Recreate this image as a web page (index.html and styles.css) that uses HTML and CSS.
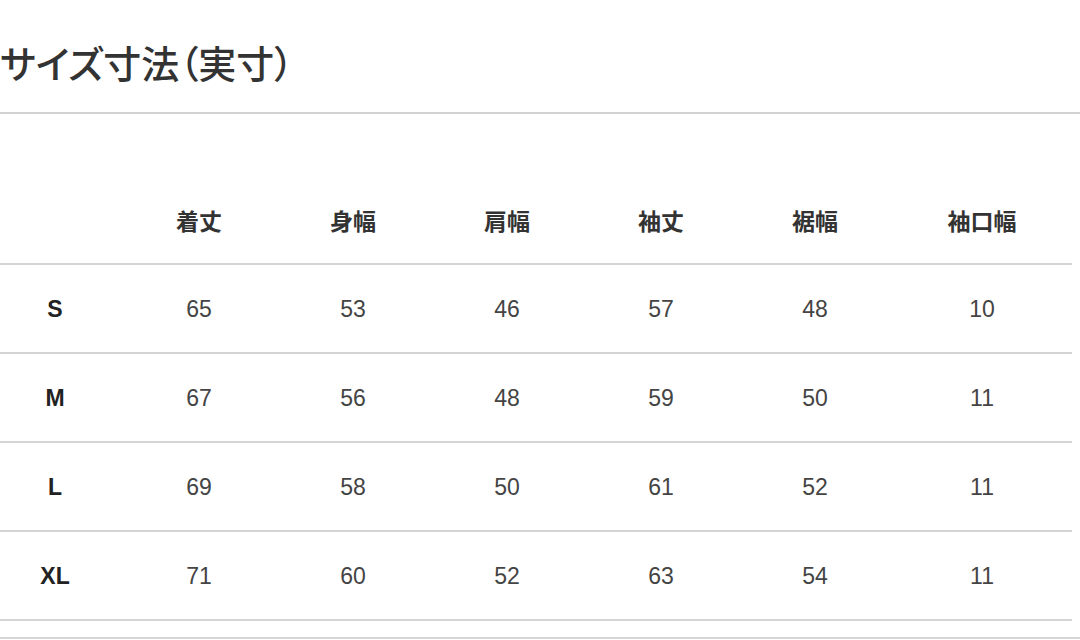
FILE: index.html
```html
<!DOCTYPE html>
<html lang="ja">
<head>
<meta charset="utf-8">
<title>サイズ寸法（実寸）</title>
<link rel="stylesheet" href="styles.css">
</head>
<body>
<div class="page">
  <h1 class="title">サイズ寸法（実寸）</h1>
  <div class="table">
    <div class="row head">
      <div class="cell label"></div>
      <div class="cell">着丈</div>
      <div class="cell">身幅</div>
      <div class="cell">肩幅</div>
      <div class="cell">袖丈</div>
      <div class="cell">裾幅</div>
      <div class="cell">袖口幅</div>
    </div>
    <div class="row">
      <div class="cell label">S</div>
      <div class="cell">65</div>
      <div class="cell">53</div>
      <div class="cell">46</div>
      <div class="cell">57</div>
      <div class="cell">48</div>
      <div class="cell">10</div>
    </div>
    <div class="row">
      <div class="cell label">M</div>
      <div class="cell">67</div>
      <div class="cell">56</div>
      <div class="cell">48</div>
      <div class="cell">59</div>
      <div class="cell">50</div>
      <div class="cell">11</div>
    </div>
    <div class="row">
      <div class="cell label">L</div>
      <div class="cell">69</div>
      <div class="cell">58</div>
      <div class="cell">50</div>
      <div class="cell">61</div>
      <div class="cell">52</div>
      <div class="cell">11</div>
    </div>
    <div class="row">
      <div class="cell label">XL</div>
      <div class="cell">71</div>
      <div class="cell">60</div>
      <div class="cell">52</div>
      <div class="cell">63</div>
      <div class="cell">54</div>
      <div class="cell">11</div>
    </div>
  </div>
  <div class="footer-rule"></div>
</div>
</body>
</html>
```

FILE: styles.css
```css
html, body {
  margin: 0;
  padding: 0;
  background: #ffffff;
}

.page {
  width: 1080px;
  height: 640px;
  overflow: hidden;
  display: flex;
  flex-direction: column;
}

.title {
  margin: 0;
  padding: 40px 0 28px 0;
  height: 44px;
  line-height: 44px;
  font-family: "Noto Sans CJK JP", "Noto Sans", sans-serif;
  font-weight: 500;
  font-size: 38px;
  font-feature-settings: "palt";
  color: #333333;
  border-bottom: 2px solid #d2d2d2;
}

.table {
  width: 1072px;
  display: flex;
  flex-direction: column;
}

.row {
  display: grid;
  grid-template-columns: 122px repeat(5, 154px) 180px;
  align-items: center;
  height: 87px;
  border-bottom: 2px solid #d4d4d4;
  font-family: "Liberation Sans", Arial, sans-serif;
  font-size: 23px;
  color: #444444;
}

.row.head {
  height: 149px;
  align-items: end;
  font-family: "Noto Sans CJK JP", sans-serif;
  font-weight: 700;
  font-size: 23px;
  color: #333333;
}

.row.head .cell {
  line-height: 26px;
  padding-bottom: 30px;
}

.cell {
  text-align: center;
  line-height: 26px;
}

.label {
  padding-right: 12px;
  font-weight: 700;
  color: #222222;
}

.footer-rule {
  margin-top: 16px;
  height: 2px;
  background: #d6d6d6;
}
```
